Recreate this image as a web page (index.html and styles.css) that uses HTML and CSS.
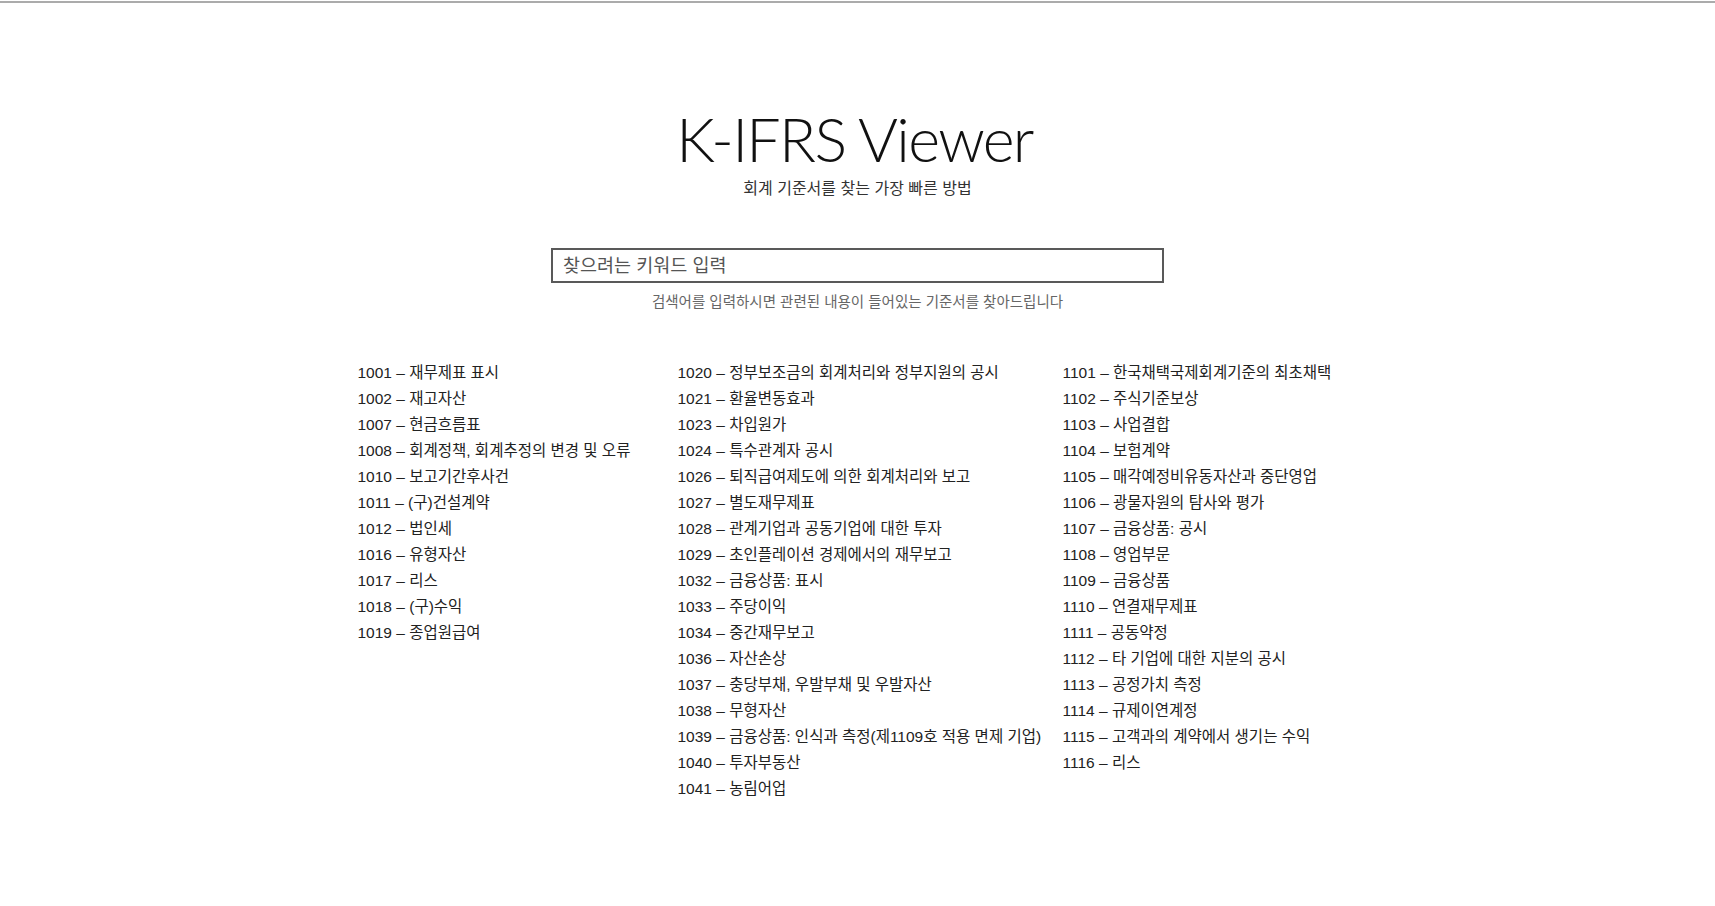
FILE: index.html
```html
<!DOCTYPE html>
<html lang="ko">
<head>
<meta charset="utf-8">
<title>K-IFRS Viewer</title>
<link rel="stylesheet" href="styles.css">
</head>
<body>
<div class="page">
  <header class="hero">
    <h1 class="title">K-IFRS Viewer</h1>
    <p class="subtitle">회계 기준서를 찾는 가장 빠른 방법</p>
  </header>
  <section class="search">
    <input class="search-input" type="text" placeholder="찾으려는 키워드 입력">
    <p class="search-help">검색어를 입력하시면 관련된 내용이 들어있는 기준서를 찾아드립니다</p>
  </section>
  <section class="list">
    <ul class="col col-1">
      <li>1001 – 재무제표 표시</li>
      <li>1002 – 재고자산</li>
      <li>1007 – 현금흐름표</li>
      <li>1008 – 회계정책, 회계추정의 변경 및 오류</li>
      <li>1010 – 보고기간후사건</li>
      <li>1011 – (구)건설계약</li>
      <li>1012 – 법인세</li>
      <li>1016 – 유형자산</li>
      <li>1017 – 리스</li>
      <li>1018 – (구)수익</li>
      <li>1019 – 종업원급여</li>
    </ul>
    <ul class="col col-2">
      <li>1020 – 정부보조금의 회계처리와 정부지원의 공시</li>
      <li>1021 – 환율변동효과</li>
      <li>1023 – 차입원가</li>
      <li>1024 – 특수관계자 공시</li>
      <li>1026 – 퇴직급여제도에 의한 회계처리와 보고</li>
      <li>1027 – 별도재무제표</li>
      <li>1028 – 관계기업과 공동기업에 대한 투자</li>
      <li>1029 – 초인플레이션 경제에서의 재무보고</li>
      <li>1032 – 금융상품: 표시</li>
      <li>1033 – 주당이익</li>
      <li>1034 – 중간재무보고</li>
      <li>1036 – 자산손상</li>
      <li>1037 – 충당부채, 우발부채 및 우발자산</li>
      <li>1038 – 무형자산</li>
      <li>1039 – 금융상품: 인식과 측정(제1109호 적용 면제 기업)</li>
      <li>1040 – 투자부동산</li>
      <li>1041 – 농림어업</li>
    </ul>
    <ul class="col col-3">
      <li>1101 – 한국채택국제회계기준의 최초채택</li>
      <li>1102 – 주식기준보상</li>
      <li>1103 – 사업결합</li>
      <li>1104 – 보험계약</li>
      <li>1105 – 매각예정비유동자산과 중단영업</li>
      <li>1106 – 광물자원의 탐사와 평가</li>
      <li>1107 – 금융상품: 공시</li>
      <li>1108 – 영업부문</li>
      <li>1109 – 금융상품</li>
      <li>1110 – 연결재무제표</li>
      <li>1111 – 공동약정</li>
      <li>1112 – 타 기업에 대한 지분의 공시</li>
      <li>1113 – 공정가치 측정</li>
      <li>1114 – 규제이연계정</li>
      <li>1115 – 고객과의 계약에서 생기는 수익</li>
      <li>1116 – 리스</li>
    </ul>
  </section>
</div>
</body>
</html>
```

FILE: styles.css
```css
html {
  margin: 0;
  padding: 1px 0 0 0;
  background: #ffffff;
}
body {
  margin: 0;
  border-top: 2px solid #ababab;
  background: #ffffff;
  color: #222;
  font-family: "Liberation Sans", "Noto Sans CJK KR", sans-serif;
}
.page {
  width: 1000px;
  margin: 0 auto;
}
.hero {
  text-align: center;
  padding-top: 99px;
}
.title {
  margin: 0;
  padding-right: 6px;
  font-family: Lato, "Open Sans", sans-serif;
  font-weight: 300;
  font-size: 61px;
  line-height: 74px;
  color: #111;
  letter-spacing: -1.7px;
}
.subtitle {
  margin: 0;
  font-family: "Noto Sans CJK KR", sans-serif;
  font-size: 16px;
  line-height: 22px;
  color: #333;
}
.search {
  margin-top: 50px;
  text-align: center;
}
.search-input {
  display: block;
  box-sizing: border-box;
  width: 613px;
  height: 35px;
  margin: 0 auto;
  padding: 0 10px 3px 10px;
  border: 2px solid #595959;
  border-radius: 0;
  outline: none;
  font-family: "Noto Sans CJK KR", sans-serif;
  font-size: 18.5px;
  color: #333;
  background: #fff;
}
.search-input::placeholder {
  color: #555;
  opacity: 1;
}
.search-help {
  margin: 8px 0 0 0;
  font-family: "Noto Sans CJK KR", sans-serif;
  font-size: 14.5px;
  line-height: 20px;
  color: #666;
}
.list {
  display: grid;
  grid-template-columns: 320px 385px 1fr;
  margin-top: 49px;
}
.col {
  list-style: none;
  margin: 0;
  padding: 0;
}
.col li {
  font-size: 15.5px;
  line-height: 26px;
  color: #222;
  white-space: nowrap;
}
```
